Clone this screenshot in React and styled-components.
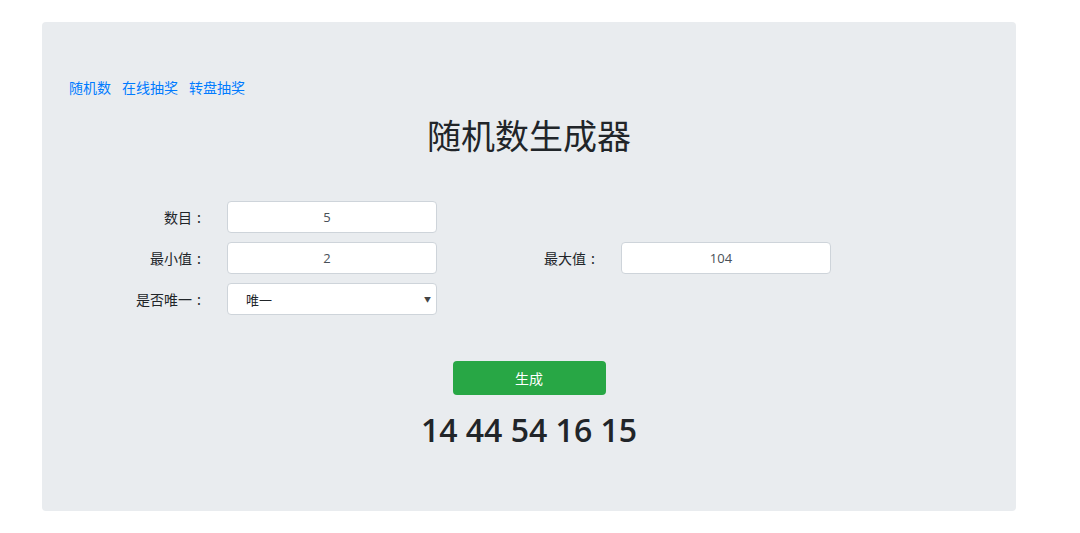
import React, { useState } from 'react'
import styled, { createGlobalStyle } from 'styled-components'

const GlobalStyle = createGlobalStyle`
  body {
    margin: 0;
    background: #fff;
    font-family: "Open Sans", "Noto Sans CJK SC", sans-serif;
    color: #212529;
  }
`

// styled
const Panel = styled.div`
  width: 974px; height: 489px;
  margin: 22px 0 0 42px;
  background: #e9ecef;
  border-radius: 4px;
  box-sizing: border-box;
  padding-top: 55px;
  display: flex; flex-direction: column;
`
const Nav = styled.nav`
  display: flex; gap: 11px;
  padding-left: 27px;
  height: 20px;
  align-items: center;
`
const NavLink = styled.a`
  color: #007bff;
  font-size: 14px;
  text-decoration: none;
  font-family: "Noto Sans CJK SC", sans-serif;
`
const Title = styled.h1`
  margin: 17px 0 0;
  text-align: center;
  font-size: 34px; font-weight: 400;
  line-height: 41px;
  font-family: "Noto Sans CJK SC", sans-serif;
`
const Form = styled.div`
  display: grid;
  grid-template-columns: 164px 210px 142px 210px;
  grid-auto-rows: 32px;
  column-gap: 21px; row-gap: 9px;
  margin-top: 46px;
`
const Label = styled.label`
  grid-column: ${(props) => props.col};
  display: flex; align-items: center; justify-content: flex-end;
  font-size: 14px;
  font-family: "Noto Sans CJK SC", sans-serif;
  color: #212529;
`
const Colon = styled.span`
  display: inline-block;
  width: 14px;
  text-align: center;
`
const Input = styled.input`
  grid-column: ${(props) => props.col};
  box-sizing: border-box;
  width: 100%; height: 32px;
  padding: 0 10px 0 0;
  border: 1px solid #ced4da;
  border-radius: 4px;
  background: #fff;
  text-align: center;
  font-size: 13px;
  font-family: "Open Sans", sans-serif;
  color: #495057;
  outline: none;
`
const SelectWrap = styled.div`
  grid-column: ${(props) => props.col};
  position: relative;
`
const Select = styled.select`
  appearance: none;
  box-sizing: border-box;
  width: 100%; height: 32px;
  border: 1px solid #ced4da;
  border-radius: 4px;
  background: #fff;
  padding-left: 18px;
  font-size: 13px;
  font-family: "Noto Sans CJK SC", sans-serif;
  color: #212529;
  outline: none;
`
const Arrow = styled.span`
  position: absolute;
  right: 6px; top: 50%;
  transform: translateY(-50%);
  font-size: 7px;
  color: #444;
  pointer-events: none;
`
const Button = styled.button`
  align-self: center;
  width: 153px; height: 34px;
  margin-top: 46px;
  border: none;
  border-radius: 4px;
  background: #28a745;
  color: #fff;
  font-size: 14px;
  font-family: "Noto Sans CJK SC", sans-serif;
  cursor: pointer;
`
const Result = styled.div`
  margin-top: 16px;
  text-align: center;
  font-size: 32px; font-weight: 600;
  line-height: 38px;
  color: #212529;
`

const App = () => {
  const [count, setCount] = useState('5')
  const [min, setMin] = useState('2')
  const [max, setMax] = useState('104')
  const [unique, setUnique] = useState('1')
  const [result, setResult] = useState([14, 44, 54, 16, 15])

  const generate = () => {
    const n = parseInt(count) || 0
    const lo = parseInt(min) || 0
    const hi = parseInt(max) || 0
    const out = []
    let guard = 0
    while (out.length < n && guard < 10000) {
      guard++
      const v = lo + Math.floor(Math.random() * (hi - lo + 1))
      if (unique === '1' && out.includes(v)) continue
      out.push(v)
    }
    setResult(out)
  }

  return (
    <>
      <GlobalStyle />
      <Panel>
        <Nav>
          <NavLink href="#">随机数</NavLink>
          <NavLink href="#">在线抽奖</NavLink>
          <NavLink href="#">转盘抽奖</NavLink>
        </Nav>
        <Title>随机数生成器</Title>
        <Form>
          <Label col={1}>数目<Colon>:</Colon></Label>
          <Input col={2} value={count} onChange={(e) => setCount(e.target.value)} />
          <Label col={1}>最小值<Colon>:</Colon></Label>
          <Input col={2} value={min} onChange={(e) => setMin(e.target.value)} />
          <Label col={3}>最大值<Colon>:</Colon></Label>
          <Input col={4} value={max} onChange={(e) => setMax(e.target.value)} />
          <Label col={1}>是否唯一<Colon>:</Colon></Label>
          <SelectWrap col={2}>
            <Select value={unique} onChange={(e) => setUnique(e.target.value)}>
              <option value="1">唯一</option>
              <option value="0">不唯一</option>
            </Select>
            <Arrow>▼</Arrow>
          </SelectWrap>
        </Form>
        <Button onClick={generate}>生成</Button>
        <Result>{result.join(' ')}</Result>
      </Panel>
    </>
  )
}

export default App
